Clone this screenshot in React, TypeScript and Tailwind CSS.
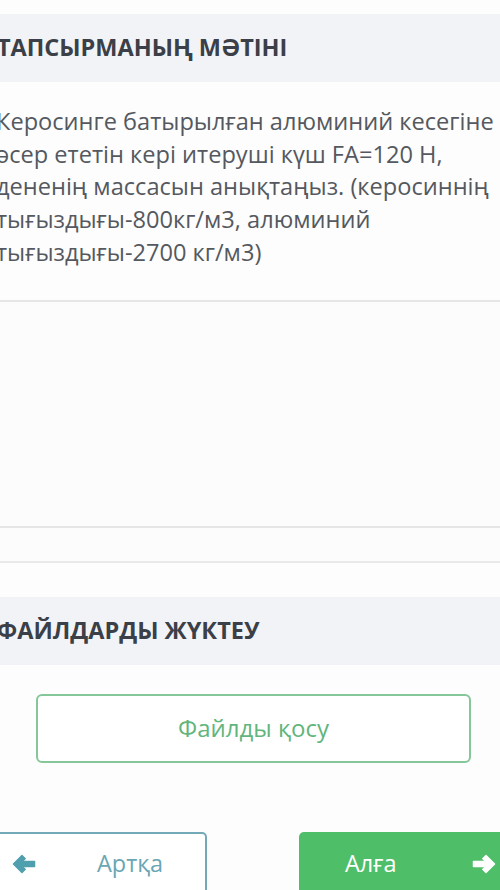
const Arrow = ({ dir, className }: { dir: 'left' | 'right'; className?: string }) => (
  <svg
    viewBox="0 0 24 20"
    className={className}
    fill="currentColor"
    stroke="currentColor"
    strokeWidth="1.5"
    strokeLinejoin="round"
    style={dir === 'right' ? { transform: 'scaleX(-1)' } : undefined}
  >
    <path d="M1.5 10 L10 1.5 L13.2 4.7 L9.6 7.6 H22.5 V12.4 H9.6 L13.2 15.3 L10 18.5 Z" />
  </svg>
);

const SectionHeader = ({ title }: { title: string }) => (
  <div className="h-[68px] bg-[#f2f3f6] flex items-center">
    <h2 className="-ml-[3px] text-[23.5px] font-bold uppercase text-[#3b3f48]">{title}</h2>
  </div>
);

const App = () => {
  return (
    <div className="w-[500px] h-[890px] overflow-hidden bg-[#fdfdfd] font-['Open_Sans',sans-serif]">
      <div className="pt-[14px]">
        <SectionHeader title="Тапсырманың мәтіні" />

        {/* Task text */}
        <p className="-ml-[4px] mt-[23px] text-[23.6px] leading-[32.7px] text-[#55595f] whitespace-nowrap">
          Керосинге батырылған алюминий кесегіне
          <br />
          әсер ететін кері итеруші күш FA=120 Н,
          <br />
          дененің массасын анықтаңыз. (керосиннің
          <br />
          тығыздығы-800кг/м3, алюминий
          <br />
          тығыздығы-2700 кг/м3)
        </p>

        {/* Answer area */}
        <div className="mt-[31px] h-[228px] border-y-2 border-[#e6e6e6] bg-[#fcfcfc]" />
        <div className="h-[35px] border-b-2 border-[#e9e9e9] bg-[#fcfcfc]" />

        <div className="mt-[34px]">
          <SectionHeader title="Файлдарды жүктеу" />
        </div>

        <div className="pt-[29px] pl-[36px] pr-[29px]">
          <button className="w-full h-[69px] rounded-[6px] border-2 border-[#86c79a] text-[24px] text-[#62b57d] bg-white">
            Файлды қосу
          </button>
        </div>

        {/* Navigation */}
        <div className="mt-[69px] flex justify-between">
          <button className="-ml-[12px] w-[219px] h-[64px] rounded-[5px] border-2 border-[#74aab8] flex items-center pl-[22px] text-[23.5px] text-[#6aa6b3] bg-white">
            <Arrow dir="left" className="w-[24px] h-[20px] text-[#4f9fae]" />
            <span className="ml-[61px]">Артқа</span>
          </button>
          <button className="-mr-[14px] w-[215px] h-[64px] rounded-[5px] bg-[#4fbe69] flex items-center pl-[46px] text-[23.5px] text-white">
            <span>Алға</span>
            <Arrow dir="right" className="ml-[75px] w-[24px] h-[20px]" />
          </button>
        </div>
      </div>
    </div>
  );
};

export default App;
